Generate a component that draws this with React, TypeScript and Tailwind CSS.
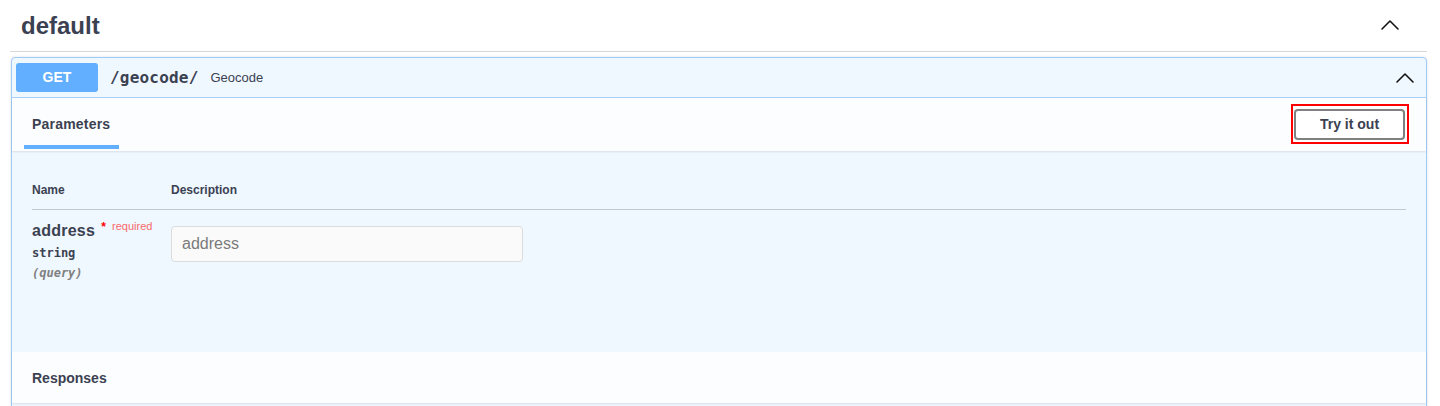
import React from "react";

const TEXT = "text-[#3b4151]";

function Chevron({ className = "" }: { className?: string }) {
  return (
    <svg
      viewBox="0 0 20 20"
      className={className}
      fill="none"
      stroke="#111111"
      strokeWidth={1.6}
      strokeLinecap="round"
      strokeLinejoin="round"
    >
      <path d="M2 14 L10 6 L18 14" />
    </svg>
  );
}

export default function App() {
  return (
    <div
      className={`h-[406px] w-full overflow-hidden bg-white ${TEXT}`}
      style={{ fontFamily: '"Liberation Sans", Arial, sans-serif' }}
    >
      <section className="ml-[10px] mr-[13px]">
        {/* Tag header */}
        <div className="flex h-[52px] items-center justify-between border-b border-[#d5d7db] pl-[11px] pr-[27px]">
          <h3 className="text-[24px] font-bold leading-[30px]">default</h3>
          <Chevron className="-mt-[2px] h-5 w-5" />
        </div>

        {/* Operation block */}
        <div className="ml-[1px] mt-[5px] rounded-[4px] border border-[#9fcbf9] bg-[#eff7ff] shadow-[0_0_3px_rgba(0,0,0,0.12)]">
          {/* Summary */}
          <div className="flex items-center border-b border-[#a9d0fa] py-[5px] pl-[4px] pr-[5px]">
            <span className="flex h-[29px] w-[82px] items-center justify-center rounded-[3px] bg-[#61affe] text-[14px] font-bold text-white">
              GET
            </span>
            <span
              className="ml-[12px] text-[16px] font-bold tracking-[0.2px] text-[#3b4151]"
              style={{ fontFamily: '"DejaVu Sans Mono", monospace' }}
            >
              /geocode/
            </span>
            <span className="ml-[12px] text-[13px] text-[#3b4151]">Geocode</span>
            <Chevron className="ml-auto mr-[6px] h-5 w-5" />
          </div>

          {/* Parameters header */}
          <div className="flex h-[53px] items-start justify-between bg-[#fbfdff] pl-3 pr-[21px] shadow-[0_1px_2px_rgba(0,0,0,0.1)]">
            <div className="flex w-[95px] flex-col">
              <div className="pl-2 pt-[16px] text-[14px] font-bold leading-[20px] tracking-[0.2px]">Parameters</div>
              <div className="mt-[11px] h-[4px] w-full bg-[#61affe]" />
            </div>
            <div className="relative mt-[11px]">
              <button className="h-[31px] w-[111px] rounded-[4px] border-2 border-[#808080] bg-white text-[14px] font-bold text-[#3b4151]">
                Try it out
              </button>
              <span className="pointer-events-none absolute -bottom-[4px] -left-[3px] -right-[4px] -top-[5px] border-2 border-[#ff0000]" />
            </div>
          </div>

          {/* Parameters body */}
          <div className="h-[201px] px-5 pt-[20px]">
            <div className="flex border-b border-[#c4c8cf] py-3 text-[12px] font-bold leading-[14px]">
              <div className="w-[139px]">Name</div>
              <div>Description</div>
            </div>
            <div className="flex pt-[11px]">
              <div className="w-[139px]">
                <div className="flex items-start text-[16px] font-bold leading-[20px] tracking-[0.25px]">
                  address
                  <span className="relative -top-[4px] ml-[6px] text-[12px] leading-[20px] text-[#ff0000]">*</span>
                  <span className="relative -top-[5px] ml-[6px] text-[11px] font-normal leading-[20px] tracking-normal text-[#f86b6b]">
                    required
                  </span>
                </div>
                <div
                  className="mt-[2px] text-[12px] font-semibold leading-[20px]"
                  style={{ fontFamily: '"DejaVu Sans Mono", monospace' }}
                >
                  string
                </div>
                <div
                  className="text-[12px] font-semibold italic leading-[20px] text-[#808080]"
                  style={{ fontFamily: '"DejaVu Sans Mono", monospace' }}
                >
                  (query)
                </div>
              </div>
              <div>
                <input
                  placeholder="address"
                  className="mt-[5px] h-[36px] w-[352px] rounded-[4px] border border-[#dcdcdc] bg-[#fafafa] px-[10px] text-[16px] text-[#3b4151] placeholder:text-[#7a7a7a] outline-none"
                />
              </div>
            </div>
          </div>

          {/* Responses header */}
          <div className="flex h-[51px] items-center bg-[#fbfdff] px-5 pt-[2px] shadow-[0_1px_2px_rgba(0,0,0,0.1)]">
            <h4 className="text-[14px] font-bold">Responses</h4>
          </div>
          <div className="h-[20px]" />
        </div>
      </section>
    </div>
  );
}
